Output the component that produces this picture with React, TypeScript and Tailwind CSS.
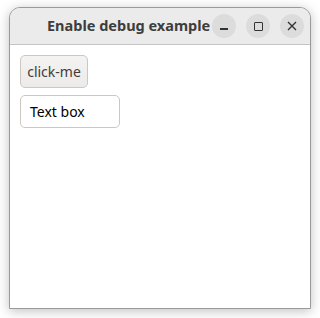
export default function App() {
  return (
    <div
      className="w-[320px] h-[318px] bg-white pt-[7px] pl-[9px] overflow-hidden"
      style={{ fontFamily: '"Noto Sans", "Open Sans", sans-serif' }}
    >
      <div className="w-[302px] h-[302px] flex flex-col bg-white border border-[#9a9a9a] rounded-t-[11px] shadow-[0_2px_12px_rgba(0,0,0,0.25)] overflow-hidden">
        <div className="h-[37px] shrink-0 flex items-center bg-[#ebebeb] border-b border-[#c4c4c4]">
          <div className="flex-1 pl-[37px] text-[14.5px] font-bold text-[#3d3d3d] whitespace-nowrap">
            Enable debug example
          </div>
          <div className="flex items-center gap-[10px] pr-[6px]">
            <button className="w-[24px] h-[24px] rounded-full bg-[#dcdcdc] flex items-center justify-center">
              <span className="block w-[8px] h-[1.5px] bg-[#333] mt-[6px]" />
            </button>
            <button className="w-[24px] h-[24px] rounded-full bg-[#dcdcdc] flex items-center justify-center">
              <span className="block w-[9px] h-[9px] border-[1.5px] border-[#333] rounded-[1px]" />
            </button>
            <button className="w-[24px] h-[24px] rounded-full bg-[#dcdcdc] flex items-center justify-center">
              <svg width="10" height="10" viewBox="0 0 10 10">
                <path d="M1 1 L9 9 M9 1 L1 9" stroke="#333" strokeWidth="1.4" />
              </svg>
            </button>
          </div>
        </div>
        <div className="flex-1 flex flex-col items-start gap-[7px] pt-[10px] pl-[10px]">
          <button className="w-[68px] h-[33px] rounded-[5px] border border-[#cdc7c2] bg-gradient-to-b from-[#f4f3f2] to-[#edebe9] text-[14px] text-[#3d3d3d]">
            click-me
          </button>
          <div className="w-[100px] h-[33px] rounded-[5px] border border-[#cdc7c2] bg-white flex items-center pl-[9px] text-[14px] text-black">
            Text box
          </div>
        </div>
      </div>
    </div>
  );
}
